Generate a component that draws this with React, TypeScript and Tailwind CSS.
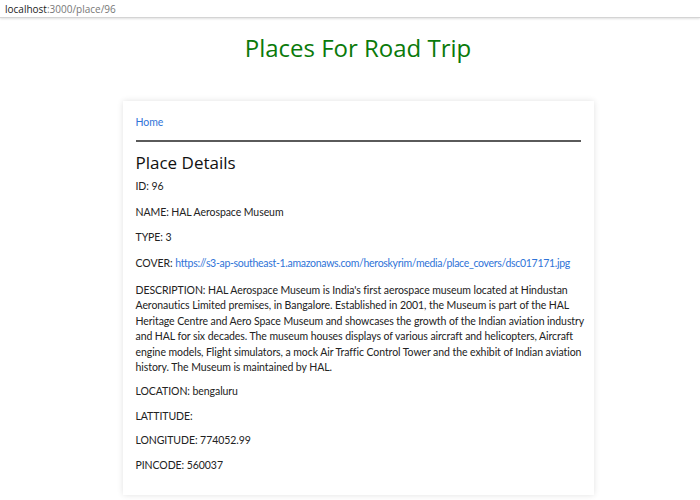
import React from "react";

const fields: { label: string; value: string; link?: boolean }[] = [
  { label: "ID", value: "96" },
  { label: "NAME", value: "HAL Aerospace Museum" },
  { label: "TYPE", value: "3" },
  {
    label: "COVER",
    value:
      "https://s3-ap-southeast-1.amazonaws.com/heroskyrim/media/place_covers/dsc017171.jpg",
    link: true,
  },
];

const rest = [
  { label: "LOCATION", value: "bengaluru" },
  { label: "LATTITUDE", value: "" },
  { label: "LONGITUDE", value: "774052.99" },
  { label: "PINCODE", value: "560037" },
];

// line breaks as they fall in the original page
const description = [
  "DESCRIPTION: HAL Aerospace Museum is India's first aerospace museum located at Hindustan",
  "Aeronautics Limited premises, in Bangalore. Established in 2001, the Museum is part of the HAL",
  "Heritage Centre and Aero Space Museum and showcases the growth of the Indian aviation industry",
  "and HAL for six decades. The museum houses displays of various aircraft and helicopters, Aircraft",
  "engine models, Flight simulators, a mock Air Traffic Control Tower and the exhibit of Indian aviation",
  "history. The Museum is maintained by HAL.",
];

const App = () => {
  return (
    <div className="w-[700px] h-[500px] overflow-hidden bg-white font-['Lato',sans-serif] text-[#222]">
      <div className="h-[18px] border-b border-[#d4d4d4] shadow-[0_1px_2px_rgba(0,0,0,0.12)] px-[5px] text-[10px] leading-[18px] font-['Open_Sans',sans-serif]">
        <span className="text-[#222]">localhost</span>
        <span className="text-[#777]">:3000/place/96</span>
      </div>

      <div className="pl-4">
        <h1 className="text-center text-[24px] leading-[30px] mt-[15px] text-[#0a7a0a] font-['Open_Sans',sans-serif]">
          Places For Road Trip
        </h1>

        <div className="mx-auto mt-[38px] w-[471px] bg-white shadow-[0_0_6px_rgba(0,0,0,0.12)] px-[13px] pt-[14px] pb-[13px] text-[10.5px] tracking-[-0.07px] leading-[15.4px]">
          <a className="text-[#2f74d8]">Home</a>
          <hr className="mt-[10px] border-0 h-[2px] bg-[#5a5a5a]" />
          <h2 className="text-[17px] leading-[24px] mt-[9px] mb-[4px] tracking-normal text-[#111] font-['Open_Sans',sans-serif]">
            Place Details
          </h2>
          {fields.map((f) => (
            <p
              key={f.label}
              className={`mt-[1px] whitespace-nowrap ${f.link ? "mb-[12px]" : "mb-[10px]"}`}
            >
              {f.label}:{" "}
              {f.link ? (
                <a className="text-[#2f74d8] tracking-[-0.3px]">{f.value}</a>
              ) : (
                f.value
              )}
            </p>
          ))}
          <p className="mb-[9px] whitespace-nowrap">
            {description.map((line, i) => (
              <React.Fragment key={i}>
                {line}
                {i < description.length - 1 && <br />}
              </React.Fragment>
            ))}
          </p>
          {rest.map((f) => (
            <p key={f.label} className="mt-[1px] mb-[9px]">
              {f.label}: {f.value}
            </p>
          ))}
        </div>
      </div>
    </div>
  );
};

export default App;
